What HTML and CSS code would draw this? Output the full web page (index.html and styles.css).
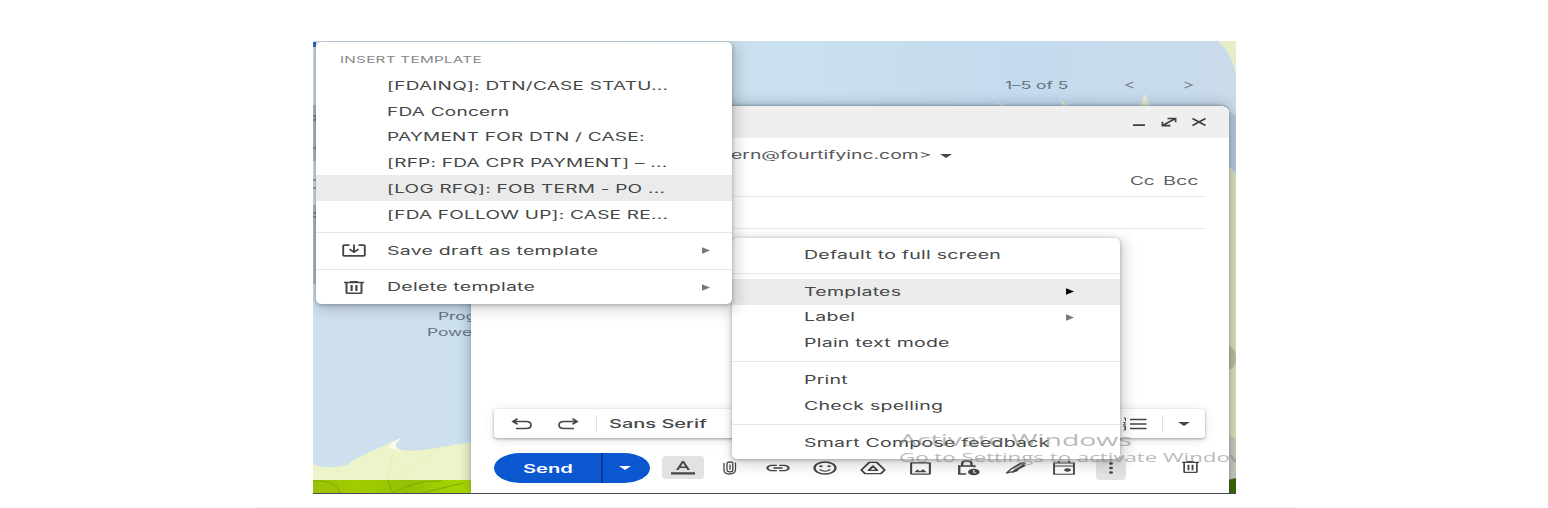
FILE: index.html
```html
<!DOCTYPE html>
<html lang="en">
<head>
<meta charset="utf-8">
<title>Compose – templates menu</title>
<link rel="stylesheet" href="styles.css">
</head>
<body>
<svg class="defs" aria-hidden="true">
  <symbol id="arrow" viewBox="0 0 8 8" preserveAspectRatio="none"><path d="M0 0.300 8 4 0 7.700Z"/></symbol>
  <symbol id="caret" viewBox="0 0 12 5" preserveAspectRatio="none"><path d="M0 0H12L6 5Z"/></symbol>
  <symbol id="trash" viewBox="0 0 20 13" preserveAspectRatio="none"><path d="M0 .8H6V0H14V.8H20V2.200H0ZM1.500 2.200H3.500V11.600H16.500V2.200H18.500V11.800Q18.500 13 16.500 13H3.500Q1.500 13 1.500 11.800ZM6.500 4H8.700V10H6.500ZM11.300 4H13.500V10H11.300Z"/></symbol>
</svg>
<main class="figure">
  <div class="screen">
    <svg class="wallpaper" viewBox="0 0 923 453">
      <defs>
        <linearGradient id="sky" x1="0" x2="1" y1="0" y2="0">
          <stop offset="0" stop-color="#cfe0ee"/><stop offset=".3" stop-color="#cce0ed"/><stop offset=".55" stop-color="#c9e0ee"/><stop offset=".76" stop-color="#c4daee"/><stop offset="1" stop-color="#cadcea"/>
        </linearGradient>
        <linearGradient id="grass" x1="0" x2="1" y1="0" y2="0">
          <stop offset="0" stop-color="#9cc00a"/><stop offset=".3" stop-color="#a2cc00"/><stop offset=".6" stop-color="#94c004"/><stop offset="1" stop-color="#a8da00"/>
        </linearGradient>
      </defs>
      <rect width="923" height="453" fill="url(#sky)"/>
      <path d="M905 0H923V34Q919 12 905 0Z" fill="#e7edc4"/>
      <path d="M915 70 923 74V132L915 124Z" fill="#b5c8d9"/>
      <path d="M687 65 685 61 692 65ZM750 65 747 58 755 65ZM827 65 832 53 837 65Z" fill="#eef0d2"/>
      <path d="M911 122 923 133V453H911Z" fill="#d9e0b2"/>
      <path d="M911 303Q923 305 923 317T911 330Z" fill="#b8bda0"/>
      <path d="M911 390 923 398V453H911Z" fill="#c7cbbb"/>
      <path d="M911 440 923 437V453H911Z" fill="#396500"/>
      <path d="M0 423Q12 429 34 424C48 413 66 408 78 401Q84 399 88 397L82 404Q84 412 110 409C130 406 144 403 160 401V453H0Z" fill="#eef4ca"/>
      <path d="M78 402 88 397 83 403Q82 409 90 410L76 407Z" fill="#f8f9e7"/>
      <path d="M80 412 74 439M128 405 82 439" stroke="#e6eebb" fill="none"/>
      <rect y="439" width="158" height="14" fill="url(#grass)"/>
      <path d="M0 440Q25 439 27 453M75 439 80 452M78 453Q100 439 128 440M105 453 150 442" stroke="#80a803" stroke-width="1" fill="none"/>
      <path d="M0 164H3V243H0Z M0 64H3V120H0Z" fill="#aebdca"/>
      <path d="M0 1H3V6H0Z" fill="#2867c8"/>
      <path d="M0 75H3V79H0M0 107H3M0 139H3M0 147H3M0 172H3M0 176H3" stroke="#59636c" fill="none"/>
    </svg>
    <div class="credits"><span class="t">Program Policies</span><span class="t powered">Powered by</span></div>
    <div class="pager">
      <span class="t">1–5 of 5</span>
      <svg class="chev" viewBox="0 0 9 8"><path d="M8.5 1 1 4l7.500 3"/></svg>
      <svg class="chev next" viewBox="0 0 9 8"><path d="M.5 1 8 4 .5 7"/></svg>
    </div>

    <section class="compose">
      <header class="compose-head">
        <svg class="win" viewBox="0 0 16 10" preserveAspectRatio="none"><path d="M2 8.200H14"/></svg>
        <svg class="win" viewBox="0 0 16 10" preserveAspectRatio="none"><path d="M2.500 8 13.500 2M6.500 1.500H14.600V5.200M1.400 4.800V8.600H9.500"/></svg>
        <svg class="win" viewBox="0 0 16 10" preserveAspectRatio="none"><path d="M1.500 1.500 14.500 8.500M14.500 1.500 1.500 8.500"/></svg>
      </header>
      <div class="row from"><span class="t">ern@fourtifyinc.com&gt;</span><svg class="caret"><use href="#caret"/></svg></div>
      <div class="row to"><span class="t">Cc</span><span class="t">Bcc</span></div>
      <div class="row subject"></div>
      <div class="body"></div>
      <div class="format">
        <svg class="ic hist" viewBox="0 0 22 12" preserveAspectRatio="none"><path d="M6.500 .8 2 3.500 6.500 6.200M2.500 3.500H15Q20 3.500 20 7T15 10.500H5"/></svg>
        <svg class="ic hist redo" viewBox="0 0 22 12" preserveAspectRatio="none"><path d="M15.500 .8 20 3.500 15.500 6.200M19.500 3.500H7Q2 3.500 2 7T7 10.500H17"/></svg>
        <i class="sep"></i>
        <span class="font-name"><span class="t">Sans Serif</span></span>
        <svg class="caret"><use href="#caret"/></svg>
        <svg class="list" viewBox="0 0 24 14" preserveAspectRatio="none"><path d="M7 2.500H23.500M7 7H23.500M7 11.500H23.500" stroke-width="1.400"/><path d="M1 1H2.500V4M.5 5.500H2.500L.5 8H3M.5 9.500H2.500V13H.5M1 11.200H2.500" stroke-width="1"/></svg>
        <i class="sep"></i>
        <svg class="caret more"><use href="#caret"/></svg>
      </div>
      <footer class="actions">
        <div class="send"><span class="send-label"><span class="t">Send</span></span><span class="send-more"><svg class="caret"><use href="#caret"/></svg></span></div>
        <div class="fmt"><svg viewBox="0 0 24 14" preserveAspectRatio="none"><path d="M0 11.200H24V13.400H0ZM5 9 11 0H13L19 9H16.500L15.200 7H8.800L7.500 9ZM9.800 5.500H14.200L12 2Z"/></svg></div>
        <div class="tools">
          <span><svg class="clip" viewBox="0 0 14 14" preserveAspectRatio="none"><path d="M1 2V9Q1 13 6.500 13T12.500 9V1.500M9.800 3V2Q9.800 1 7 1T4 2.500V9Q4 10.800 7 10.800T9.800 9V2.500M7 3.500V8.800" fill="none" stroke="#444746" stroke-width="1.300"/></svg></span>
          <span><svg viewBox="0 0 24 24" preserveAspectRatio="none"><path d="M3.900 12c0-1.710 1.390-3.100 3.100-3.100h4V7H7c-2.760 0-5 2.240-5 5s2.240 5 5 5h4v-1.900H7c-1.710 0-3.100-1.390-3.100-3.100zM8 13h8v-2H8v2zm9-6h-4v1.900h4c1.710 0 3.100 1.390 3.100 3.100s-1.390 3.100-3.100 3.100h-4V17h4c2.760 0 5-2.240 5-5s-2.240-5-5-5z"/></svg></span>
          <span><svg viewBox="0 0 24 24" preserveAspectRatio="none"><circle cx="12" cy="12" r="9" fill="none" stroke="#444746" stroke-width="2"/><circle cx="8.500" cy="9.500" r="1.500"/><circle cx="15.500" cy="9.500" r="1.500"/><path d="M12 17.500c2.330 0 4.310-1.460 5.110-3.500h-1.670c-.7 1.190-1.970 2-3.450 2s-2.750-.81-3.450-2H6.880c.8 2.040 2.790 3.500 5.120 3.500z"/></svg></span>
          <span><svg viewBox="0 0 24 24" preserveAspectRatio="none"><g fill="none" stroke="#444746" stroke-width="2" stroke-linejoin="round"><path d="M8.800 3.500H15.200L22 15 18.800 20.500H5.200L2 15Z"/><path d="M12 9 8.300 15.500H15.700Z"/></g></svg></span>
          <span><svg class="photo" viewBox="0 0 24 24" preserveAspectRatio="none"><path d="M4 4V20H20V4ZM2 3.500Q2 2 4 2H20Q22 2 22 3.500V20.500Q22 22 20 22H4Q2 22 2 20.500Z" fill-rule="evenodd"/><path d="M6 18 9 13.500 11.500 16.500 14.500 13 18 18Z"/></svg></span>
          <span><svg viewBox="0 0 24 24" preserveAspectRatio="none"><path d="M10.500 21H4.500V9H17.500V11M7 8V5.500Q7 1.500 11 1.500T15 5.500V8" fill="none" stroke="#444746" stroke-width="2"/><circle cx="17" cy="18" r="5"/><path d="M17 15V18.500L19 20" fill="none" stroke="#fff" stroke-width="1"/></svg></span>
          <span><svg class="pen" viewBox="0 0 24 24" preserveAspectRatio="none"><path d="M3 21 8 13 16 4Q18 2 20 4M3 21 11 17 20 8 18 5M8 13 16 5M10 17 19 7M8 20 14 16M17 4H21" fill="none" stroke="#444746" stroke-width="1.700"/><path d="M8 13 16 4 20 7 11 16Z" opacity=".35"/></svg></span>
          <span><svg viewBox="0 0 24 24" preserveAspectRatio="none"><path d="M3.500 4.500H20.500V21.500H3.500ZM3.500 9H20.500M7.500 1.500V4.500M16.500 1.500V4.500" fill="none" stroke="#444746" stroke-width="1.600"/><ellipse cx="15" cy="15" rx="2.800" ry="2.500"/></svg></span>
          <span><span class="dots"><svg viewBox="0 0 28 16"><ellipse cx="14" cy="3.500" rx="2" ry="1.300"/><ellipse cx="14" cy="8" rx="2" ry="1.300"/><ellipse cx="14" cy="12.500" rx="2" ry="1.300"/></svg></span></span>
        </div>
        <svg class="discard"><use href="#trash"/></svg>
      </footer>
    </section>

    <nav class="menu options">
      <div class="item"><span class="t">Default to full screen</span></div>
      <hr>
      <div class="item active"><span class="t">Templates</span><svg class="arrow dark"><use href="#arrow"/></svg></div>
      <div class="item"><span class="t">Label</span><svg class="arrow"><use href="#arrow"/></svg></div>
      <div class="item"><span class="t">Plain text mode</span></div>
      <hr>
      <div class="item"><span class="t">Print</span></div>
      <div class="item"><span class="t">Check spelling</span></div>
      <hr>
      <div class="item"><span class="t">Smart Compose feedback</span></div>
    </nav>

    <nav class="menu templates">
      <div class="heading"><span class="t">INSERT TEMPLATE</span></div>
      <div class="item name"><span class="t">[FDAINQ]: DTN/CASE STATU...</span></div>
      <div class="item name"><span class="t">FDA Concern</span></div>
      <div class="item name"><span class="t">PAYMENT FOR DTN / CASE:</span></div>
      <div class="item name"><span class="t">[RFP: FDA CPR PAYMENT] – ...</span></div>
      <div class="item name active"><span class="t">[LOG RFQ]: FOB TERM - PO ...</span></div>
      <div class="item name"><span class="t">[FDA FOLLOW UP]: CASE RE...</span></div>
      <hr>
      <div class="item"><svg class="lead" viewBox="0 0 24 14" preserveAspectRatio="none"><path d="M7.500 1.200H3Q1.200 1.200 1.200 2V12Q1.200 12.800 3 12.800H21Q22.800 12.800 22.800 12V2Q22.800 1.200 21 1.200H16.500M12 .5V8.500M7.500 5.500 12 8.800 16.500 5.500" fill="none" stroke="#444746" stroke-width="1.900"/></svg><span class="t">Save draft as template</span><svg class="arrow"><use href="#arrow"/></svg></div>
      <hr>
      <div class="item"><svg class="lead bin"><use href="#trash"/></svg><span class="t">Delete template</span><svg class="arrow"><use href="#arrow"/></svg></div>
    </nav>

    <div class="watermark"><div class="t">Activate Windows</div><div class="t small">Go to Settings to activate Windows.</div></div>
  </div>
</main>
</body>
</html>
```
FILE: styles.css
```css
* { box-sizing: border-box; }
body { margin: 0; width: 1548px; height: 508px; overflow: hidden; background: #fff; font-family: Inter, "Liberation Sans", sans-serif; color: #444746; }
.defs { position: absolute; width: 0; height: 0; }
.figure { width: 1038px; height: 508px; margin-left: 256px; padding: 41px 0 0 57px; border-bottom: 1px solid #efefef; }
.screen { position: relative; width: 923px; height: 453px; overflow: hidden; border-bottom: 1px solid #434b58; }
.wallpaper { position: absolute; inset: 0; width: 923px; height: 453px; }
svg { display: block; flex: none; fill: #444746; }

/* Wide lettering */
.t { display: inline-block; white-space: nowrap; transform: scaleX(1.65); transform-origin: 0 50%; }

.credits { position: absolute; left: 114px; top: 268px; width: 60px; font-size: 10.5px; line-height: 16px; color: #65717b; }
.credits .t { display: block; margin-left: 11px; }
.credits .powered { margin-left: 0; }
.pager { position: absolute; left: 692px; top: 36px; display: flex; align-items: center; height: 16px; font-size: 10.5px; color: #63707b; }
.pager .t { width: 120px; }
.chev { width: 9px; height: 8px; fill: none; stroke: #74818c; stroke-width: 1.2; }
.chev.next { margin-left: 50px; }

.compose { position: absolute; left: 158px; top: 65px; width: 758px; height: 387px; display: flex; flex-direction: column; background: #fff; border-radius: 9px 9px 0 0 / 6px 6px 0 0; overflow: hidden; box-shadow: 0 0 14px rgba(40,60,80,.4), 0 -1px 2px rgba(40,60,80,.3); }
.compose-head { height: 32px; background: #efefef; display: flex; justify-content: flex-end; align-items: center; gap: 14px; padding-right: 22px; }
.win { width: 16px; height: 10px; fill: none; stroke: #3c4043; stroke-width: 1.7; }
.row { margin: 0 24px; }
.from { height: 33px; display: flex; align-items: center; padding-left: 236px; font-size: 11px; color: #55585a; }
.from .t { width: 209px; transform: scaleX(1.76); }
.from .caret { margin-top: 2px; }
.caret { width: 12px; height: 4px; }
.to { height: 26px; border-bottom: 1px solid #ececec; display: flex; align-items: center; justify-content: flex-end; padding-bottom: 6px; font-size: 11.5px; color: #5f6368; }
.to .t { width: 33px; }
.to .t + .t { width: 42px; transform: scaleX(1.72); }
.subject { height: 32px; border-bottom: 1px solid #e8eaf0; }
.body { flex: 1; }
.format { height: 29px; margin: 0 24px 15px 23px; display: flex; align-items: center; background: #fff; border-radius: 3px; box-shadow: 0 1px 3px rgba(0,0,0,.35), 0 2px 12px rgba(0,0,0,.1); }
.hist { width: 22px; height: 12px; margin-left: 17px; fill: none; stroke: #444746; stroke-width: 1.7; }
.redo { margin: 0 17px 0 24px; }
.sep { width: 1px; height: 17px; background: #dcdfe4; flex: none; }
.font-name { width: 134px; padding-left: 12px; font-size: 11.5px; font-weight: 500; }
.font-name .t { transform: scaleX(1.74); }
.list { width: 24px; height: 14px; margin-left: auto; margin-right: 15px; fill: none; stroke: #444746; }
.more { margin: 0 15px; }
.actions { height: 40px; display: flex; align-items: flex-start; padding: 0 0 0 23px; }
.send { width: 156px; height: 30px; display: flex; background: #0b57d0; border-radius: 26px / 15px; overflow: hidden; color: #fff; }
.send-label { width: 109px; border-right: 2px solid #073b95; padding-left: 29px; font-size: 12px; font-weight: 600; line-height: 31px; }
.send-label .t { transform: scaleX(1.68); }
.send-more { flex: 1; display: flex; align-items: center; justify-content: center; padding-right: 4px; }
.send-more svg { fill: #fff; }
.fmt { width: 42px; height: 23px; margin: 3px 2px 0 12px; background: #e1e2e2; border-radius: 4px; display: flex; align-items: center; justify-content: center; }
.fmt svg { width: 24px; height: 14px; }
.tools { display: grid; grid-template-columns: repeat(9, 47.7px); height: 30px; align-items: center; }
.tools > span { display: flex; justify-content: center; }
.tools svg { width: 28px; height: 16px; }
.tools .clip { width: 14px; height: 14px; }
.tools .photo { width: 25px; height: 15px; }
.tools .pen { width: 26px; height: 14px; }
.dots { width: 30px; height: 24px; padding-top: 4px; background: #e3e3e3; border-radius: 4px; display: flex; justify-content: center; }
.discard { width: 17px; height: 12px; margin: 8px 30px 0 auto; }

.menu { position: absolute; background: #fff; border-radius: 5px; font-size: 11.3px; letter-spacing: .15px; box-shadow: 0 1px 4px rgba(0,0,0,.3), 3px 4px 14px 3px rgba(0,0,0,.14); }
.options { left: 419px; top: 197px; width: 388px; height: 221px; padding-top: 4px; }
.templates { left: 3px; top: 1px; width: 416px; height: 262px; }
.heading { height: 30px; padding: 3px 0 0 24px; line-height: 29px; font-size: 9.5px; color: #878787; }
.heading .t { transform: scaleX(1.61); }
.item { height: 25.8px; display: flex; align-items: center; padding: 0 46px 0 71.5px; }
.options .item:first-child { padding-top: 1px; }
.item .t { transform: scaleX(1.725); }
.item.name .t { transform: scaleX(1.68); }
.templates .item { padding: 0 22px 0 71px; }
.templates .item.name { padding-top: 2px; }
.item.active { background: #ebebeb; }
.menu hr { height: 1px; margin: 5px 0; border: 0; background: #e6e6e6; }
.arrow { width: 8px; height: 7px; margin-left: auto; fill: #777; }
.arrow.dark { fill: #000; }
.lead { width: 24px; height: 13px; margin: 0 21px 0 -45px; }
.bin { width: 20px; height: 13px; margin: 0 23px 0 -43px; }
.watermark { position: absolute; left: 586px; top: 389px; font-family: "Open Sans", sans-serif; font-size: 15.500px; line-height: 20px; color: rgba(125,125,125,.55); }
.watermark .t { display: block; transform: scaleX(1.83); }
.watermark .small { font-size: 12.500px; line-height: 16px; transform: scaleX(1.78); }
```
